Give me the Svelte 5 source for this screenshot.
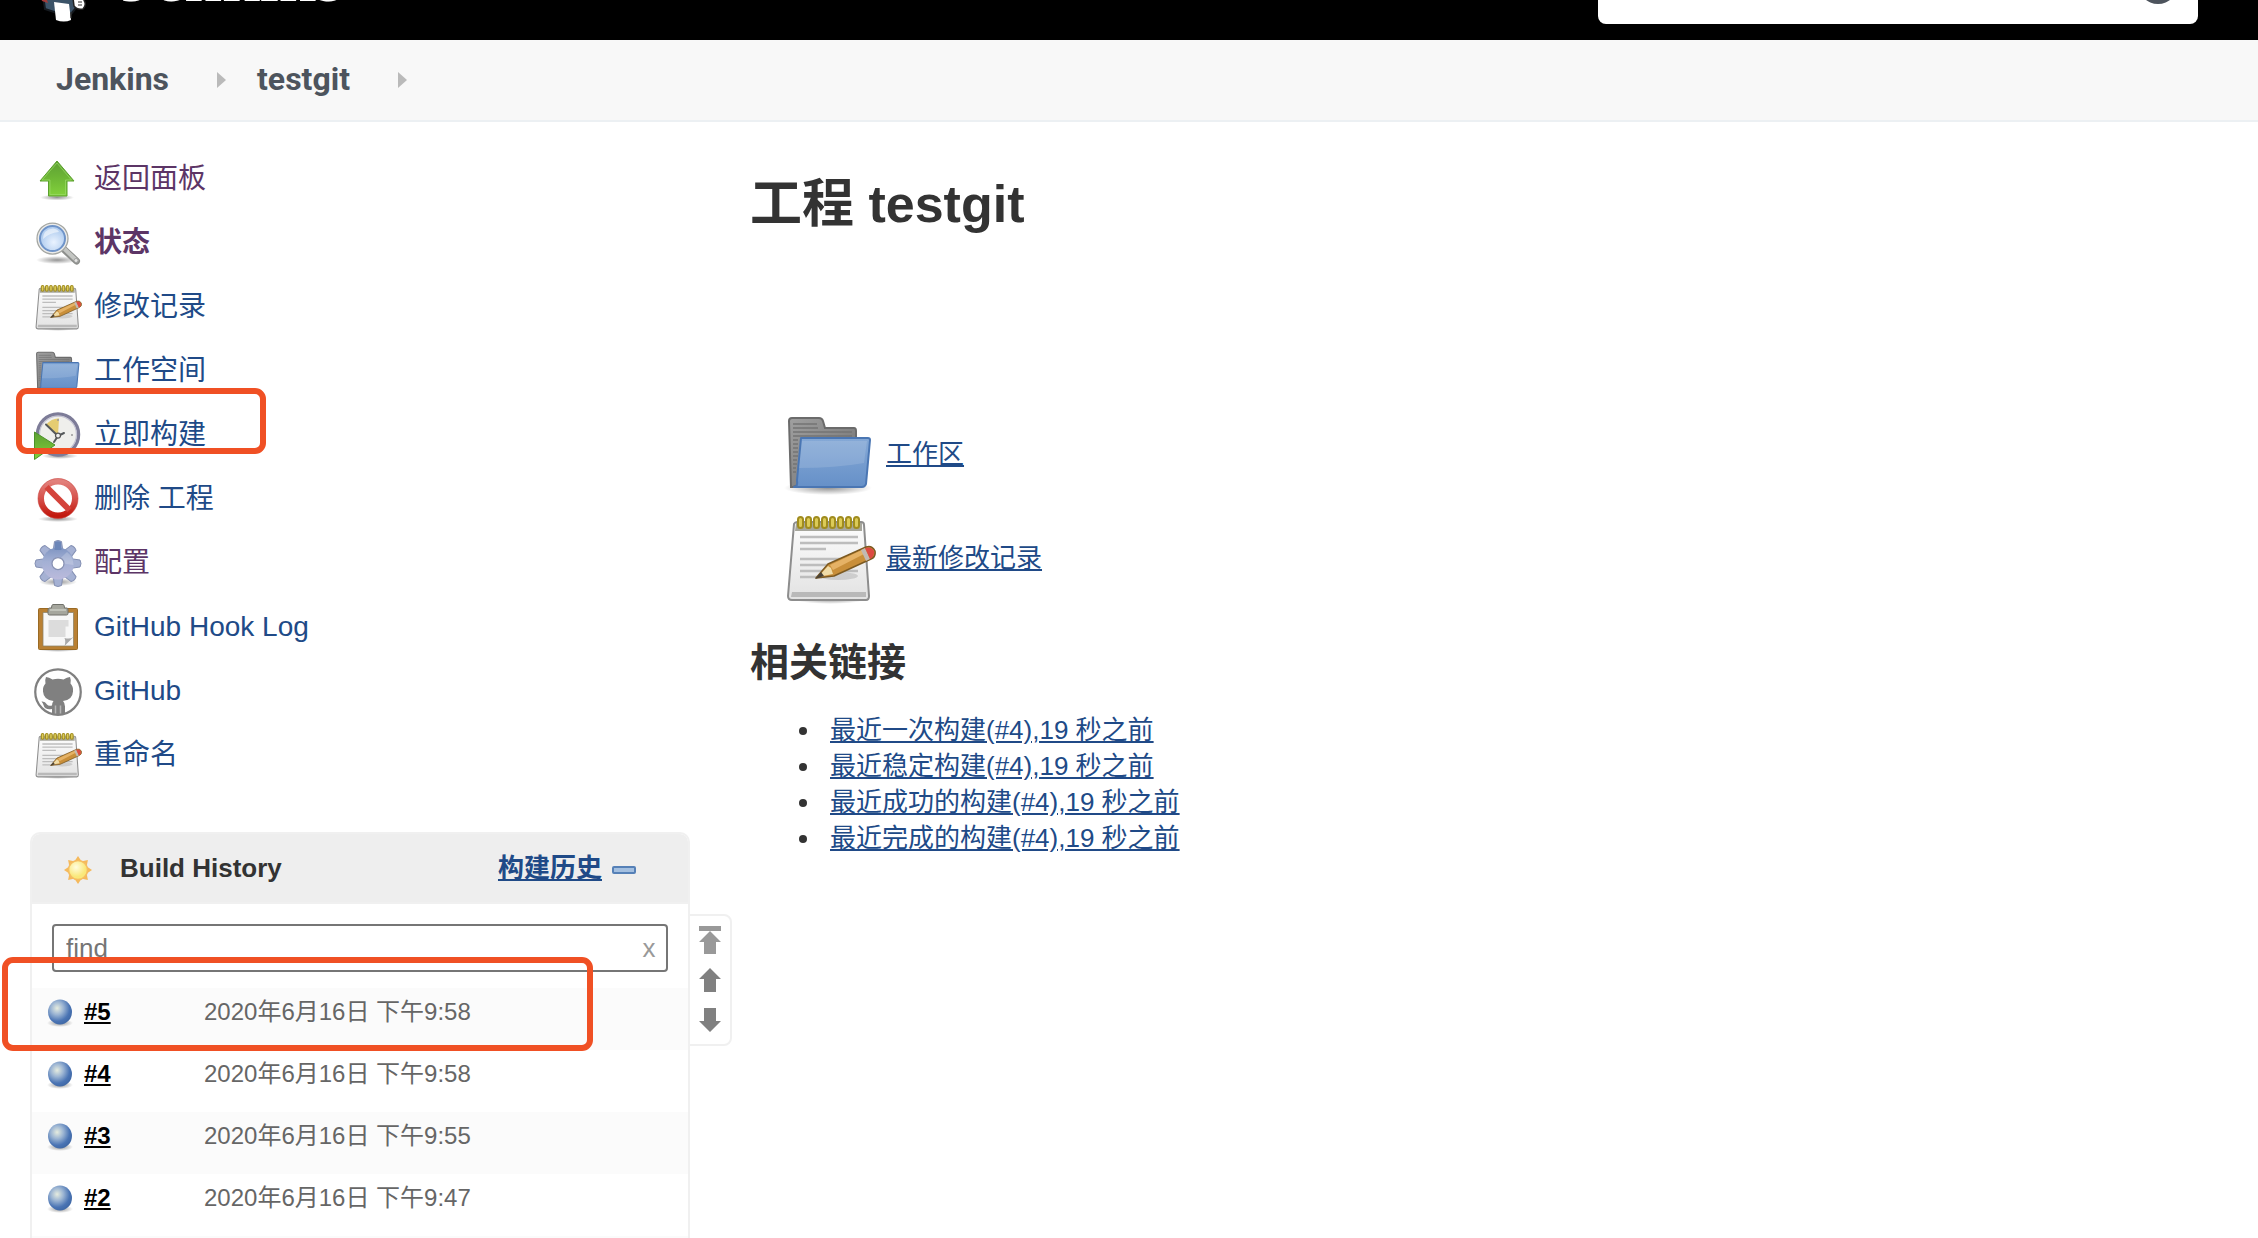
<script>
  const tasks = [
    { label: '返回面板', icon: 'up', visited: true },
    { label: '状态', icon: 'search', visited: true, current: true },
    { label: '修改记录', icon: 'notepad' },
    { label: '工作空间', icon: 'folder' },
    { label: '立即构建', icon: 'clock' },
    { label: '删除 工程', icon: 'stop' },
    { label: '配置', icon: 'gear', visited: true },
    { label: 'GitHub Hook Log', icon: 'clipboard' },
    { label: 'GitHub', icon: 'github' },
    { label: '重命名', icon: 'notepad' },
  ];

  const builds = [
    { id: '#5', date: '2020年6月16日 下午9:58' },
    { id: '#4', date: '2020年6月16日 下午9:58' },
    { id: '#3', date: '2020年6月16日 下午9:55' },
    { id: '#2', date: '2020年6月16日 下午9:47' },
  ];

  const permalinks = [
    '最近一次构建(#4),19 秒之前',
    '最近稳定构建(#4),19 秒之前',
    '最近成功的构建(#4),19 秒之前',
    '最近完成的构建(#4),19 秒之前',
  ];

  const rings = [19, 27, 35, 43, 51, 59, 67, 75];
  const teeth = [0, 45, 90, 135, 180, 225, 270, 315];
  const tight = ['notepad', 'folder'];

  let filter = $state('');
</script>

{#snippet picture(name, viewBox = '0 0 96 96')}
  <svg class="picture" {viewBox} aria-hidden="true">
    {#if name === 'up'}
      <ellipse cx="46" cy="83" rx="34" ry="6" fill="url(#shade)" />
      <path d="M46 10 L80 50 H66 V80 H29 V50 H12 Z" fill="url(#green)" stroke="#5aa02c" stroke-width="2" stroke-linejoin="round" />
      <path d="M46 14 L75 48 H63 V77 H32 V48 H16 Z" fill="none" stroke="#9adb66" stroke-width="2" opacity=".7" />
    {:else if name === 'search'}
      <ellipse cx="46" cy="80" rx="42" ry="8" fill="url(#shade)" />
      <path d="M58 57 L85 82" stroke="#8d8f8c" stroke-width="14" stroke-linecap="round" />
      <path d="M60 57 L85 81" stroke="#c4c6c3" stroke-width="8" stroke-linecap="round" />
      <circle cx="84" cy="81" r="4" fill="#e4e4e2" stroke="#929292" stroke-width="1.5" />
      <circle cx="37" cy="37" r="31" fill="#ececea" stroke="#a4a6a2" stroke-width="2.5" />
      <circle cx="37" cy="37" r="25" fill="url(#lens)" stroke="#6f94c9" stroke-width="4" />
      <path d="M18 38 Q18 19 38 17 Q48 18 50 24 Q30 26 18 38Z" fill="#fff" opacity=".55" />
    {:else if name === 'notepad'}
      <ellipse cx="50" cy="89" rx="36" ry="5" fill="url(#shade)" />
      <path d="M14 14 Q15 12 17 12 H81 Q84 12 84 15 L89 86 Q89 90 86 90 H12 Q8 90 8 86 Z" fill="url(#paper)" stroke="#8d8d8d" stroke-width="2" />
      <path d="M16 13 H82 V21 H15 Z" fill="#a6a69c" />
      <path d="M12 82 H86 V87 H11 Z" fill="#b9b9b9" />
      {#each rings as x}
        <rect x={x - 1} y="7" width="5" height="11" rx="2.5" fill="#dccb58" stroke="#a08c1e" stroke-width="2" />
      {/each}
      <path d="M20 27 H78 M20 33 H78 M20 39 H46 M20 49 H60 M20 55 H54 M20 61 H78 M20 67 H42" stroke="#bdbdbd" stroke-width="2.4" />
      <ellipse cx="58" cy="66" rx="20" ry="4" fill="#999" opacity=".35" />
      <path d="M36 68 L48 54 L86 37 Q92 35 95 41 Q96 47 91 49 L54 66 Z" fill="#c98f3a" stroke="#7c5a22" stroke-width="1.5" stroke-linejoin="round" />
      <path d="M50 55 L82 40 L84 44 L53 60 Z" fill="#e5b266" />
      <path d="M38 67 L48 56 L51 58 L53 64 Z" fill="#f0dca8" />
      <path d="M35 69 L41 62 L44 66 Z" fill="#4a4338" />
      <path d="M81 40 L85 38 L90 49 L86 51 Z" fill="#c2b9b2" />
      <path d="M85 38 Q91 36 94 41 Q95 46 90 49 Z" fill="#dd4a42" />
    {:else if name === 'folder'}
      <ellipse cx="48" cy="82" rx="44" ry="7" fill="url(#shade)" />
      <path d="M9 15 Q9 12 12 12 H39 Q42 12 43 15 L45 22 H74 Q76 22 76 25 V60 L13 81 H11 Z" fill="url(#gray)" stroke="#6b6b6b" stroke-width="2" />
      <path d="M13 18 H37 M13 22 H38 M13 26 H72 M13 30 H72 M13 34 H18 M13 38 H18 M13 42 H18 M13 46 H18 M13 50 H18 M13 54 H17 M13 58 H17 M13 62 H16 M13 66 H16" stroke="#747474" stroke-width="1.4" />
      <path d="M21 32 H88 Q90 32 90 34 L86 78 Q85 81 82 81 H14 Q18 81 17 74 Z" fill="url(#blue)" stroke="#4a76b3" stroke-width="2" stroke-linejoin="round" />
      <path d="M22 35 H87 L84 57 Q56 62 19 62 Z" fill="#fff" opacity=".13" />
    {:else if name === 'clock'}
      <ellipse cx="52" cy="88" rx="36" ry="6" fill="url(#shade)" />
      <circle cx="48" cy="45" r="41" fill="#efefec" stroke="#7d7c98" stroke-width="7" />
      <circle cx="48" cy="45" r="37" fill="none" stroke="#c3c2d2" stroke-width="2.5" />
      <path d="M48 46 L24 25 Q36 12 50 13 Z" fill="#e3c65d" opacity=".85" />
      <circle cx="48" cy="16" r="2" fill="#999" /><circle cx="76" cy="46" r="2" fill="#999" /><circle cx="48" cy="75" r="2" fill="#999" />
      <path d="M24 25 L48 48 L60 42 M48 48 L40 60" fill="none" stroke="#55595b" stroke-width="4" stroke-linecap="round" />
      <circle cx="48" cy="47" r="5" fill="#eee" stroke="#555" stroke-width="2.5" />
      <path d="M1 40 L42 66 L1 95 Z" fill="url(#green)" stroke="#4c922a" stroke-width="2" stroke-linejoin="round" />
    {:else if name === 'stop'}
      <ellipse cx="48" cy="86" rx="40" ry="6" fill="url(#shade)" />
      <circle cx="48" cy="45" r="34" fill="#fff" fill-opacity=".6" stroke="url(#red)" stroke-width="12" />
      <path d="M25 22 L71 68" stroke="#d4433b" stroke-width="12" />
      <circle cx="48" cy="45" r="40" fill="none" stroke="#c9453f" stroke-width="1.5" opacity=".8" />
    {:else if name === 'gear'}
      <ellipse cx="48" cy="84" rx="38" ry="8" fill="url(#shade)" />
      {#each teeth as angle}
        <path d="M38 24 L41 3 Q48 -1 55 3 L58 24 Z" transform="rotate({angle} 48 47)" fill="#a5b1d3" stroke="#8490b3" stroke-width="2" />
      {/each}
      <circle cx="48" cy="47" r="32" fill="url(#steel)" />
      <path d="M41 20 L42 4 Q48 1 54 4 L55 20 Z" fill="#6c86b8" />
      <path d="M44 45 L66 24 Q79 34 79 50 Z" fill="#fff" opacity=".2" />
      <circle cx="48" cy="47" r="12" fill="#fff" stroke="#8791b2" stroke-width="2.5" />
    {:else if name === 'clipboard'}
      <ellipse cx="48" cy="91" rx="40" ry="5" fill="url(#shade)" />
      <rect x="9" y="9" width="78" height="82" rx="2" fill="#b98033" stroke="#9a6a24" stroke-width="2" />
      <path d="M18 17 H79 V84 H18 Z" fill="#f7f7f7" stroke="#8c8267" stroke-width="1.5" />
      <path d="M29 32 H69 V45 H63 V66 H29 Z" fill="#dcdcdc" />
      <path d="M79 66 L61 84 Q64 74 61 68 Q72 71 79 66Z" fill="#a9a9a9" />
      <path d="M38 1 H58 Q61 1 61 8 H66 Q68 8 68 12 V19 Q68 22 65 22 H31 Q28 22 28 19 V12 Q28 8 31 8 H35 Q35 1 38 1Z" fill="#a5a69d" stroke="#70716a" stroke-width="2" />
      <path d="M32 12 H64" stroke="#cbccc5" stroke-width="3" />
    {:else if name === 'github'}
      <circle cx="48" cy="48" r="45.5" fill="#fff" stroke="#808080" stroke-width="4.5" />
      <path d="M24 18 Q30 18 37 23 Q48 20 59 23 Q66 18 72 18 Q75 25 73 31 Q79 37 78 47 Q77 64 58 66 Q62 70 62 77 V90 Q55 94 48 94 Q41 94 36 91 V82 Q22 85 19 74 Q18 70 15 67 Q22 66 26 73 Q29 77 36 75 Q36 69 39 66 Q19 64 18 47 Q17 37 23 31 Q21 25 24 18 Z" fill="#808080" />
      <path d="M43 75 V91 M53 75 V91" stroke="#b5b5b5" stroke-width="3" />
    {/if}
  </svg>
{/snippet}

<svg class="defs" aria-hidden="true">
  <defs>
    <radialGradient id="shade"><stop offset="0" stop-color="#000" stop-opacity=".42" /><stop offset="1" stop-color="#000" stop-opacity="0" /></radialGradient>
    <linearGradient id="green" x2="0" y2="1"><stop offset="0" stop-color="#5e9f35" /><stop offset=".45" stop-color="#6cb535" /><stop offset="1" stop-color="#83d23c" /></linearGradient>
    <radialGradient id="lens" cx=".55" cy=".65"><stop offset="0" stop-color="#eaf3ff" /><stop offset="1" stop-color="#b4cff0" /></radialGradient>
    <linearGradient id="paper" x2="0" y2="1"><stop offset="0" stop-color="#fdfdfd" /><stop offset="1" stop-color="#e2e2e2" /></linearGradient>
    <linearGradient id="gray" x2="1" y2="1"><stop offset="0" stop-color="#a0a0a0" /><stop offset="1" stop-color="#6e6e6e" /></linearGradient>
    <linearGradient id="blue" x2="0" y2="1"><stop offset="0" stop-color="#85a9d6" /><stop offset="1" stop-color="#6690c8" /></linearGradient>
    <linearGradient id="red" x2="0" y2="1"><stop offset="0" stop-color="#e2807b" /><stop offset=".5" stop-color="#d6514b" /><stop offset="1" stop-color="#c2190f" /></linearGradient>
    <linearGradient id="steel" gradientUnits="userSpaceOnUse" x1="48" y1="0" x2="48" y2="96"><stop offset="0" stop-color="#6c86b8" /><stop offset=".45" stop-color="#a3b0d4" /><stop offset="1" stop-color="#c6bfe0" /></linearGradient>
    <radialGradient id="ball" cx=".38" cy=".35" r=".65"><stop offset="0" stop-color="#e6ecdf" /><stop offset=".4" stop-color="#9cb5d3" /><stop offset=".8" stop-color="#4a74b4" /><stop offset="1" stop-color="#416aa8" /></radialGradient>
    <radialGradient id="sun" cx=".4" cy=".35"><stop offset="0" stop-color="#fffde0" /><stop offset="1" stop-color="#fae87a" /></radialGradient>
  </defs>
</svg>

<div class="page">
  <header>
    <a class="logo" href="#home">
      <svg class="butler" viewBox="0 0 48 64" aria-hidden="true">
        <path d="M2 30 H36 V50 L31 56 L17 55 L5 51 Z" fill="#3b5368" stroke="#151a20" stroke-width="2" />
        <path d="M0 36 H5 L8 45 L2 43 Z" fill="#a33b38" />
        <path d="M14 44 L29 46 L31 62 Q24 65 16 62 Z" fill="#fff" />
        <path d="M33 40 Q39 36 44 42 Q47 47 43 51 Q37 52 34 48 Z" fill="#fff" stroke="#222" stroke-width="1.5" />
        <path d="M38 44 h4 M38 47 h4 M31 54 v6" stroke="#333" stroke-width="1.2" />
      </svg>
      <span>Jenkins</span>
    </a>
    <div class="search">
      <svg class="lens" viewBox="0 0 28 28" aria-hidden="true"><circle cx="11" cy="11" r="8" fill="none" stroke="#999" stroke-width="2" /><path d="M17 17 L27 27" stroke="#999" stroke-width="2" /></svg>
      <input type="search" aria-label="搜索" />
      <svg class="help" viewBox="0 0 40 40" aria-hidden="true"><circle cx="20" cy="20" r="20" fill="#4d545d" /></svg>
    </div>
  </header>

  <nav class="crumbs">
    <a href="#jenkins">Jenkins</a>
    <svg viewBox="0 0 9 16" aria-hidden="true"><path d="M0 0 L9 8 L0 16Z" fill="#bababa" /></svg>
    <a href="#testgit">testgit</a>
    <svg viewBox="0 0 9 16" aria-hidden="true"><path d="M0 0 L9 8 L0 16Z" fill="#bababa" /></svg>
  </nav>

  <div class="body">
    <aside>
      <ul class="tasks">
        {#each tasks as task}
          <li class:marked={task.icon === 'clock'}>
            <a href="#task" class:visited={task.visited} class:current={task.current}>
              {@render picture(task.icon, tight.includes(task.icon) ? '4 4 92 92' : undefined)}
              <span>{task.label}</span>
            </a>
          </li>
        {/each}
      </ul>

      <section class="history">
        <div class="head">
          <svg class="sun" viewBox="0 0 32 32" aria-hidden="true">
            {#each teeth as angle}
              <path d="M12 8 L16 2 L20 8 Z" transform="rotate({angle} 16 16)" fill="#f5b95c" />
            {/each}
            <circle cx="16" cy="16" r="9.5" fill="url(#sun)" stroke="#f5bd62" stroke-width="1.6" />
          </svg>
          <h2>Build History</h2>
          <a href="#trend">构建历史</a>
          <button class="collapse" aria-label="收起">
            <svg viewBox="0 0 24 8" aria-hidden="true"><rect x="1" y="1" width="22" height="6" rx="1" fill="#a3bfe0" stroke="#5580b7" stroke-width="2" /></svg>
          </button>
        </div>
        <div class="filter">
          <input type="text" placeholder="find" aria-label="find" bind:value={filter} />
          <button aria-label="清除" onclick={() => (filter = '')}>x</button>
        </div>
        <table>
          <tbody>
            {#each builds as build, i}
              <tr class:marked={i === 0}>
                <td class="status">
                  <svg viewBox="0 0 32 32" aria-hidden="true">
                    <ellipse cx="16" cy="26" rx="13" ry="4" fill="url(#shade)" />
                    <ellipse cx="16" cy="15" rx="12" ry="12.5" fill="url(#ball)" />
                  </svg>
                </td>
                <td class="number"><a href="#build">{build.id}</a></td>
                <td class="date">{build.date}</td>
              </tr>
            {/each}
          </tbody>
        </table>
        <div class="more"></div>

        <div class="pager">
          <button aria-label="最新"><svg viewBox="0 0 24 30" aria-hidden="true"><path d="M1 1 H23 V6 H1Z M12 6 L23 17 H18 V29 H6 V17 H1Z" fill="#999" /></svg></button>
          <button aria-label="较新"><svg viewBox="0 0 24 30" aria-hidden="true"><path d="M12 3 L23 14 H18 V27 H6 V14 H1Z" fill="#808080" /></svg></button>
          <button aria-label="较旧"><svg viewBox="0 0 24 30" aria-hidden="true"><path d="M12 27 L23 16 H18 V3 H6 V16 H1Z" fill="#808080" /></svg></button>
        </div>
      </section>
    </aside>

    <main>
      <h1>工程 testgit</h1>
      <div class="shortcuts">
        <a href="#workspace">{@render picture('folder')}<span>工作区</span></a>
        <a href="#changes">{@render picture('notepad')}<span>最新修改记录</span></a>
      </div>
      <h2>相关链接</h2>
      <ul class="links">
        {#each permalinks as link}
          <li><a href="#permalink">{link}</a></li>
        {/each}
      </ul>
    </main>
  </div>
</div>

<style>
  :global(body) {
    margin: 0;
    overflow: hidden;
    background: #fff;
  }
  .page {
    height: 100vh;
    overflow: hidden;
    display: flex;
    flex-direction: column;
    color: #333;
    font: 26px/36px 'Liberation Sans', 'Noto Sans CJK SC', sans-serif;
  }
  .page *, .page *::after { box-sizing: border-box; }
  .defs { position: absolute; width: 0; height: 0; }
  svg { display: block; flex: none; }
  a { color: #204a87; }
  h1, h2, ul { margin: 0; padding: 0; }
  button { padding: 0; border: 0; background: none; font: inherit; }

  header {
    flex: none;
    height: 40px;
    overflow: hidden;
    display: flex;
    justify-content: space-between;
    align-items: flex-end;
    padding: 0 60px 0 40px;
    background: #000;
  }
  .logo {
    display: flex;
    align-items: flex-end;
    gap: 32px;
    color: #fff;
    text-decoration: none;
    font: bold 68px/68px 'Liberation Serif', serif;
  }
  .logo span { margin-bottom: 28px; }
  .butler { width: 48px; height: 64px; margin-bottom: 18px; }
  .search {
    display: flex;
    align-items: center;
    width: 600px;
    height: 80px;
    margin-bottom: 16px;
    padding: 0 20px 0 28px;
    border-radius: 8px;
    background: #fff;
  }
  .lens { width: 28px; height: 28px; margin-bottom: 4px; }
  .search input { flex: 1; min-width: 0; height: 60px; border: 0; font: inherit; }
  .help { width: 40px; height: 40px; }

  .crumbs {
    flex: none;
    display: flex;
    align-items: center;
    height: 82px;
    padding: 0 56px 2px;
    border-bottom: 2px solid #ecf0f3;
    background: #f8f8f8;
    font: bold 32px/40px Roboto, sans-serif;
  }
  .crumbs a { color: #4d545d; text-decoration: none; }
  .crumbs svg { width: 9px; height: 16px; margin: 2px 31px 0 48px; }

  .body { flex: 1; min-height: 0; display: flex; }
  aside { flex: none; width: 690px; padding: 26px 0 0 30px; display: flex; flex-direction: column; }
  .tasks { flex: none; list-style: none; margin-bottom: 44px; }
  .tasks li { position: relative; }
  .tasks a {
    display: flex;
    align-items: center;
    gap: 12px;
    height: 64px;
    padding-left: 4px;
    font-size: 28px;
    text-decoration: none;
  }
  .tasks span { padding-bottom: 2px; }
  .tasks .visited { color: #5c3566; }
  .tasks .current { font-weight: bold; }
  .tasks .picture { width: 48px; height: 48px; }

  .marked::after {
    content: '';
    position: absolute;
    border: 6px solid #f05024;
    border-radius: 11px;
    pointer-events: none;
  }
  .tasks .marked::after { left: -14px; top: -16px; width: 250px; height: 66px; }
  tr.marked { position: relative; }
  tr.marked::after { left: -30px; top: -31px; width: 591px; height: 94px; }

  .history {
    position: relative;
    flex: 1;
    display: flex;
    flex-direction: column;
    border: 2px solid #f0f0f0;
    border-bottom: 0;
    border-radius: 10px 10px 0 0;
  }
  .head {
    flex: none;
    display: flex;
    align-items: center;
    height: 70px;
    padding: 0 52px 0 30px;
    border-bottom: 2px solid #f0f0f0;
    border-radius: 8px 8px 0 0;
    background: #eee;
    font-weight: bold;
  }
  .head h2 { flex: 1; font-size: 26px; }
  .sun { width: 32px; height: 32px; margin: 4px 26px 0 0; }
  .collapse { margin: 4px 0 0 10px; }
  .collapse svg { width: 24px; height: 8px; }
  .filter { position: relative; flex: none; padding: 20px 20px 16px; }
  .filter input {
    display: block;
    width: 100%;
    height: 48px;
    padding: 0 48px 0 12px;
    border: 2px solid #767676;
    border-radius: 4px;
    color: #333;
    font: inherit;
  }
  .filter input::placeholder { color: #757575; }
  .filter button { position: absolute; right: 26px; top: 26px; width: 26px; color: #999; }

  table { flex: none; width: 100%; border-collapse: collapse; font-size: 24px; }
  tr { height: 62px; }
  tr:nth-child(odd) { background: #fbfbfb; }
  td { padding: 8px 0 0; vertical-align: top; line-height: 32px; }
  .status { width: 52px; padding-left: 12px; }
  .status svg { width: 32px; height: 34px; }
  .number { width: 120px; font-weight: bold; }
  .number a { color: #000; }
  .date { color: #666; }
  .more { flex: 1; background: #fbfbfb; }

  .pager {
    position: absolute;
    left: 100%;
    top: 80px;
    width: 44px;
    height: 132px;
    padding: 9px 0;
    display: flex;
    flex-direction: column;
    align-items: center;
    justify-content: space-between;
    border: 2px solid #f0f0f0;
    border-radius: 0 8px 8px 0;
    background: #fff;
  }
  .pager svg { width: 24px; height: 30px; }

  main { flex: 1; min-width: 0; padding: 50px 60px 0; }
  h1 { font-size: 52px; line-height: 64px; }
  .shortcuts { margin: 166px 0 0 30px; display: flex; flex-direction: column; align-items: flex-start; }
  .shortcuts a { display: flex; align-items: center; gap: 10px; height: 104px; }
  .shortcuts .picture { width: 96px; height: 96px; }
  main h2 { margin-top: 29px; font-size: 39px; line-height: 48px; }
  .links { margin-top: 25px; padding-left: 72px; }
  .links li { padding-left: 8px; }
</style>
